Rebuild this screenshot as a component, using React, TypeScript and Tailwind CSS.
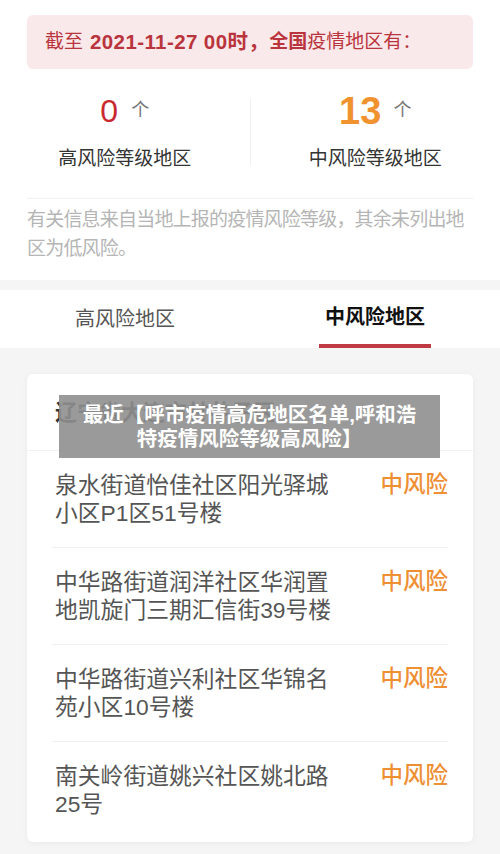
import React from 'react';

const rows = [
  ['泉水街道怡佳社区阳光驿城', '小区P1区51号楼'],
  ['中华路街道润洋社区华润置', '地凯旋门三期汇信街39号楼'],
  ['中华路街道兴利社区华锦名', '苑小区10号楼'],
  ['南关岭街道姚兴社区姚北路', '25号'],
];

const App: React.FC = () => {
  return (
    <div className="relative w-[500px] h-[854px] overflow-hidden bg-[#f5f5f5] font-['Liberation_Sans','Noto_Sans_CJK_SC',sans-serif]">
      {/* Summary */}
      <section className="bg-white pt-[15px] h-[280px]">
        <div className="mx-[27px] h-[54px] rounded-md bg-[#f9e9ea] flex items-center pl-[18px] text-[19px] text-[#b9343c] whitespace-nowrap">
          <span>截至</span>
          <span className="ml-[7px] font-semibold text-[20.5px] tracking-[0.4px]">2021-11-27 00时，</span>
          <span className="font-semibold">全国</span>
          <span>疫情地区有：</span>
        </div>

        <div className="flex items-center mt-[17px] h-[92px]">
          <div className="flex-1 flex flex-col items-center">
            <div className="flex items-center h-[38px]">
              <span className="text-[32px] font-medium text-[#c92a30] leading-none">0</span>
              <span className="ml-[13px] text-[18px] text-[#777]">个</span>
            </div>
            <div className="mt-[15px] text-[19px] text-[#333] leading-[28px]">高风险等级地区</div>
          </div>
          <div className="w-px h-[66px] bg-[#eeeeee]" />
          <div className="flex-1 flex flex-col items-center">
            <div className="flex items-center h-[38px]">
              <span className="text-[38px] font-semibold text-[#f0922e] leading-none">13</span>
              <span className="ml-[12px] text-[18px] text-[#777]">个</span>
            </div>
            <div className="mt-[15px] text-[19px] text-[#333] leading-[28px]">中风险等级地区</div>
          </div>
        </div>

        <div className="mx-[27px] mt-[20px] h-px bg-[#f0f0f0]" />
        <p className="mx-[27px] mt-[6px] text-[19px] leading-[29px] tracking-[-0.8px] text-[#b5b5b5] whitespace-nowrap">
          有关信息来自当地上报的疫情风险等级，其余未列出地
          <br />
          区为低风险。
        </p>
      </section>

      {/* Tabs */}
      <div className="mt-[10px] bg-white h-[58px] flex">
        <div className="flex-1 flex items-center justify-center text-[20px] text-[#555]">高风险地区</div>
        <div className="flex-1 flex flex-col items-center justify-end">
          <span className="text-[20px] font-semibold text-[#111] leading-[28px] mb-[13px]">中风险地区</span>
          <div className="w-[112px] h-[4px] bg-[#bf3a42]" />
        </div>
      </div>

      {/* List card */}
      <div className="mx-[27px] mt-[26px] bg-white rounded-md shadow-[0_1px_6px_rgba(0,0,0,0.05)] pb-[4px]">
        <div className="h-[77px] flex items-center pl-[28px] text-[22px] font-semibold text-[#333] border-b border-[#f2f2f2]">
          辽宁省大连市甘井子区
        </div>
        <div className="mx-[25px]">
          {rows.map((r, i) => (
            <div key={i} className={`flex justify-between py-[20px] ${i < rows.length - 1 ? 'border-b border-[#f0f0f0]' : ''}`}>
              <div className="pl-[3px] text-[22.8px] leading-[28px] text-[#555] w-[300px] whitespace-nowrap">
                {r[0]}
                <br />
                {r[1]}
              </div>
              <div className="text-[22.5px] leading-[28px] text-[#ee8f34] font-medium">中风险</div>
            </div>
          ))}
        </div>
      </div>

      {/* Title overlay */}
      <div className="absolute left-[59px] top-[395px] w-[381px] h-[63px] bg-[#8f8f8f]/90 flex items-center justify-center">
        <p className="text-center text-white font-bold text-[20.5px] leading-[24px] whitespace-nowrap">
          最近【呼市疫情高危地区名单,呼和浩
          <br />
          特疫情风险等级高风险】
        </p>
      </div>
    </div>
  );
};

export default App;
